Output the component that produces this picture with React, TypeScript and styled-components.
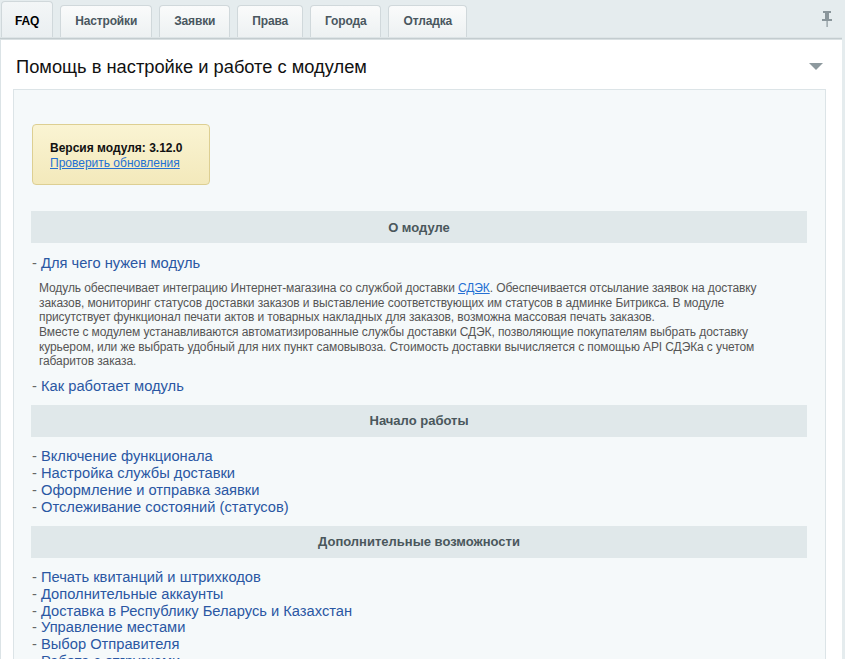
import React from "react";
import styled, { createGlobalStyle } from "styled-components";

const Global = createGlobalStyle`
  html, body { margin: 0; padding: 0; }
  body {
    background: #e5ecee;
    font-family: Arial, "Liberation Sans", Helvetica, sans-serif;
    overflow: hidden;
  }
`;

const Page = styled.div`
  width: 845px;
  height: 659px;
  overflow: hidden;
  background: #e5ecee;
  display: flex;
  flex-direction: column;
`;

const TabBar = styled.div`
  display: flex;
  align-items: flex-end;
  gap: 7px;
  height: 37px;
  padding: 0 13px 0 1px;
  flex-shrink: 0;
`;

const Tab = styled.div<{ $active?: boolean }>`
  box-sizing: border-box;
  height: ${(p) => (p.$active ? 36 : 32)}px;
  padding: ${(p) => (p.$active ? "12px 13px 0" : "8px 14px 0")};
  font-size: 12px;
  line-height: 14px;
  font-weight: bold;
  letter-spacing: -0.15px;
  color: ${(p) => (p.$active ? "#000" : "#4a575f")};
  border: 1px solid #d0d8db;
  border-bottom: none;
  border-radius: 4px 4px 0 0;
  background: ${(p) =>
    p.$active
      ? "linear-gradient(#f3f6f7, #eaeff1)"
      : "linear-gradient(#fafbfb, #edf1f2)"};
  white-space: nowrap;
`;

const Pin = styled.div`
  margin-left: auto;
  align-self: flex-start;
  margin-top: 11px;
  width: 10px;
  height: 16px;
  display: flex;
`;

const Panel = styled.div`
  flex: 1;
  background: #fff;
  margin-right: 3px;
  border-top: 1px solid #dde4e6;
  box-shadow: inset 0 1px 0 #c3cccf, inset 0 2px 0 #d9e0e2, inset 1px 0 0 #dbe3e6;
  padding: 3px 16px 0 13px;
  display: flex;
  flex-direction: column;
`;

const PanelHead = styled.div`
  height: 48px;
  display: flex;
  align-items: center;
  justify-content: space-between;
  padding: 0 3px 0 3px;
`;

const Title = styled.h1`
  margin: 4px 0 0;
  font-weight: normal;
  font-size: 18.3px;
  color: #111;
`;

const Triangle = styled.div`
  width: 0;
  height: 0;
  border-left: 7px solid transparent;
  border-right: 7px solid transparent;
  border-top: 7px solid #8d999e;
  margin-top: 2px;
`;

const Inner = styled.div`
  flex: 1;
  background: #f5f9fa;
  border: 1px solid #dce4e7;
  border-bottom: none;
  padding: 34px 18px 0 17px;
`;

const VersionBox = styled.div`
  box-sizing: border-box;
  width: 178px;
  height: 61px;
  margin-left: 1px;
  border: 1px solid #ddcf92;
  border-radius: 4px;
  background: linear-gradient(#faf4d3, #f3e9bb);
  padding: 16px 0 0 17px;
  font-size: 12px;
  line-height: 15px;
`;

const VersionTitle = styled.div`
  font-weight: bold;
  color: #111;
`;

const SmallLink = styled.a`
  color: #2470d3;
  text-decoration: underline;
  cursor: pointer;
`;

const SectionHead = styled.div<{ $first?: boolean }>`
  height: 32px;
  margin-top: ${(p) => (p.$first ? 26 : 0)}px;
  margin-bottom: 11.5px;
  background: #e0e8ea;
  display: flex;
  align-items: center;
  justify-content: center;
  font-weight: bold;
  font-size: 13px;
  color: #4a575c;
`;

const Group = styled.div`
  margin-bottom: 10.5px;
`;

const Item = styled.div`
  font-size: 14.7px;
  line-height: 16.7px;
  color: #666;
  padding-left: 1px;
`;

const ItemLink = styled.a`
  color: #2a57a3;
  text-decoration: none;
  cursor: pointer;
`;

const Para = styled.p`
  margin: 10px 0 9px 8px;
  font-size: 12px;
  line-height: 14.6px;
  letter-spacing: -0.1px;
  color: #555;
  white-space: nowrap;
`;

const PinIcon = () => (
  <svg width="10" height="16" viewBox="0 0 10 16">
    <rect x="1" y="0" width="8" height="2" fill="#8a969b" />
    <rect x="3" y="2" width="4" height="7" fill="#8a969b" />
    <rect x="0" y="8" width="10" height="2" fill="#8a969b" />
    <rect x="4.5" y="10" width="1.2" height="6" fill="#8a969b" />
  </svg>
);

const LinkItem = ({ text }: { text: string }) => (
  <Item>
    - <ItemLink>{text}</ItemLink>
  </Item>
);

export default function App() {
  const tabs = ["FAQ", "Настройки", "Заявки", "Права", "Города", "Отладка"];
  return (
    <Page>
      <Global />
      <TabBar>
        {tabs.map((t, i) => (
          <Tab key={t} $active={i === 0}>
            {t}
          </Tab>
        ))}
        <Pin>
          <PinIcon />
        </Pin>
      </TabBar>
      <Panel>
        <PanelHead>
          <Title>Помощь в настройке и работе с модулем</Title>
          <Triangle />
        </PanelHead>
        <Inner>
          <VersionBox>
            <VersionTitle>Версия модуля: 3.12.0</VersionTitle>
            <SmallLink>Проверить обновления</SmallLink>
          </VersionBox>

          <SectionHead $first>О модуле</SectionHead>
          <Group>
            <LinkItem text="Для чего нужен модуль" />
            <Para>
              Модуль обеспечивает интеграцию Интернет-магазина со службой доставки{" "}
              <SmallLink>СДЭК</SmallLink>. Обеспечивается отсылание заявок на доставку
              <br />
              заказов, мониторинг статусов доставки заказов и выставление соответствующих им
              статусов в админке Битрикса. В модуле
              <br />
              присутствует функционал печати актов и товарных накладных для заказов, возможна
              массовая печать заказов.
              <br />
              Вместе с модулем устанавливаются автоматизированные службы доставки СДЭК,
              позволяющие покупателям выбрать доставку
              <br />
              курьером, или же выбрать удобный для них пункт самовывоза. Стоимость доставки
              вычисляется с помощью API СДЭКа с учетом
              <br />
              габаритов заказа.
            </Para>
            <LinkItem text="Как работает модуль" />
          </Group>

          <SectionHead>Начало работы</SectionHead>
          <Group>
            <LinkItem text="Включение функционала" />
            <LinkItem text="Настройка службы доставки" />
            <LinkItem text="Оформление и отправка заявки" />
            <LinkItem text="Отслеживание состояний (статусов)" />
          </Group>

          <SectionHead>Дополнительные возможности</SectionHead>
          <Group>
            <LinkItem text="Печать квитанций и штрихкодов" />
            <LinkItem text="Дополнительные аккаунты" />
            <LinkItem text="Доставка в Республику Беларусь и Казахстан" />
            <LinkItem text="Управление местами" />
            <LinkItem text="Выбор Отправителя" />
            <LinkItem text="Работа с отгрузками" />
          </Group>
        </Inner>
      </Panel>
    </Page>
  );
}
